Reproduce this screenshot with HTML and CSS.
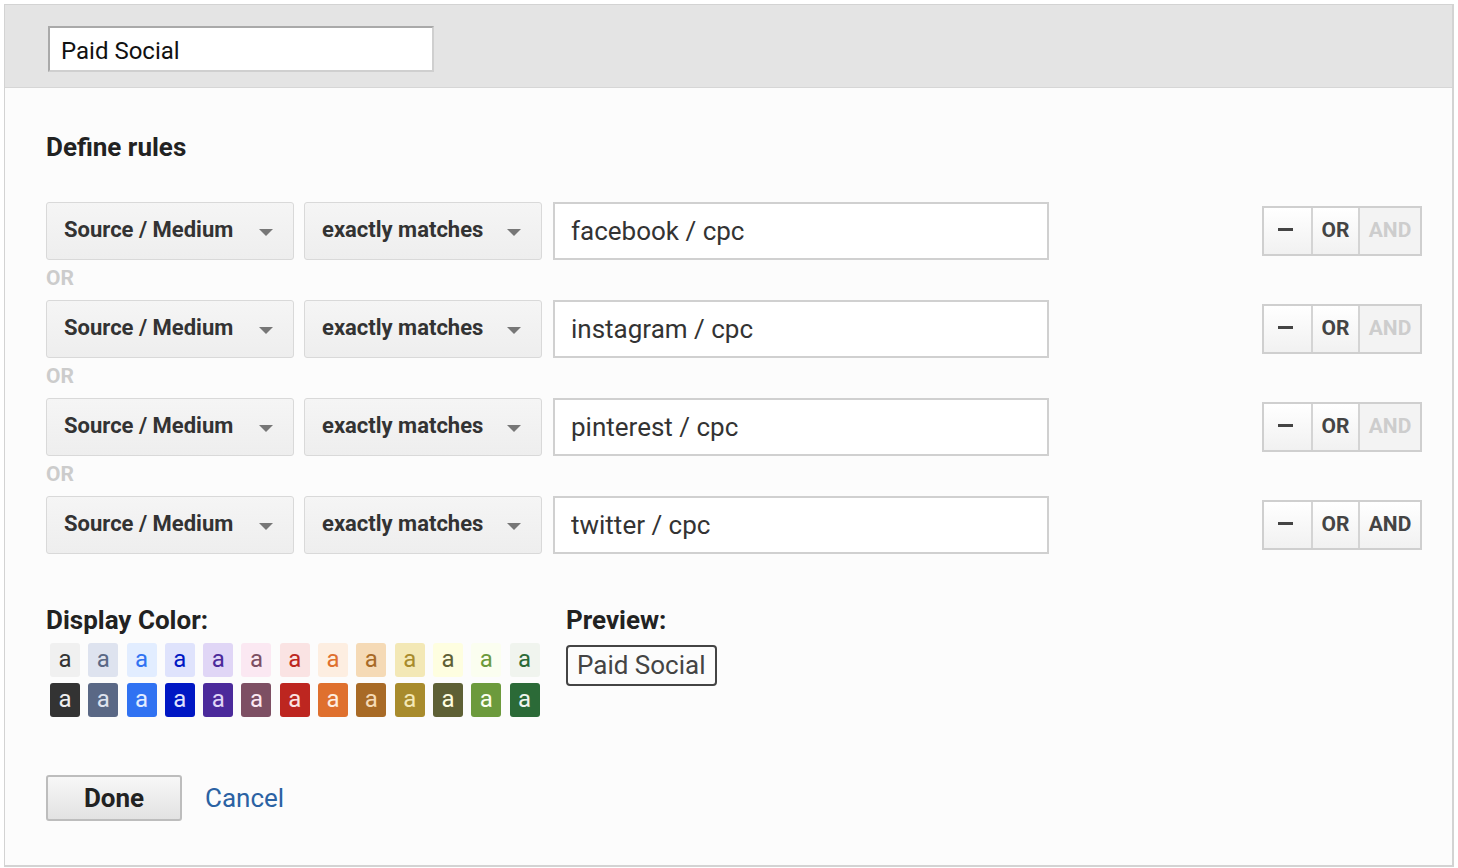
FILE: index.html
```html
<!DOCTYPE html>
<html lang="en">
<head>
  <meta charset="UTF-8" />
  <title>Channel definition</title>
  <link rel="stylesheet" href="styles.css">
</head>
<body>
  <div class="frame">
    <div class="header">
      <input class="name-input" type="text" value="Paid Social">
    </div>

    <div class="content">
      <h2 class="section-title">Define rules</h2>

      <div class="rules">
        <div class="rule">
          <div class="select wide">Source / Medium<span class="caret"></span></div>
          <div class="select">exactly matches<span class="caret"></span></div>
          <input class="rule-input" type="text" value="facebook / cpc">
          <div class="ops">
            <div class="op minus"><span class="bar"></span></div>
            <div class="op">OR</div>
            <div class="op and off">AND</div>
          </div>
        </div>
        <div class="or-label">OR</div>
        <div class="rule">
          <div class="select wide">Source / Medium<span class="caret"></span></div>
          <div class="select">exactly matches<span class="caret"></span></div>
          <input class="rule-input" type="text" value="instagram / cpc">
          <div class="ops">
            <div class="op minus"><span class="bar"></span></div>
            <div class="op">OR</div>
            <div class="op and off">AND</div>
          </div>
        </div>
        <div class="or-label">OR</div>
        <div class="rule">
          <div class="select wide">Source / Medium<span class="caret"></span></div>
          <div class="select">exactly matches<span class="caret"></span></div>
          <input class="rule-input" type="text" value="pinterest / cpc">
          <div class="ops">
            <div class="op minus"><span class="bar"></span></div>
            <div class="op">OR</div>
            <div class="op and off">AND</div>
          </div>
        </div>
        <div class="or-label">OR</div>
        <div class="rule">
          <div class="select wide">Source / Medium<span class="caret"></span></div>
          <div class="select">exactly matches<span class="caret"></span></div>
          <input class="rule-input" type="text" value="twitter / cpc">
          <div class="ops">
            <div class="op minus"><span class="bar"></span></div>
            <div class="op">OR</div>
            <div class="op and">AND</div>
          </div>
        </div>
      </div>

      <div class="display">
        <div class="colors">
          <h3 class="label">Display Color:</h3>
          <div class="swatches">
            <span class="sw c1">a</span>
            <span class="sw c2">a</span>
            <span class="sw c3">a</span>
            <span class="sw c4">a</span>
            <span class="sw c5">a</span>
            <span class="sw c6">a</span>
            <span class="sw c7">a</span>
            <span class="sw c8">a</span>
            <span class="sw c9">a</span>
            <span class="sw c10">a</span>
            <span class="sw c11">a</span>
            <span class="sw c12">a</span>
            <span class="sw c13">a</span>
          </div>
          <div class="swatches dark">
            <span class="sw c1">a</span>
            <span class="sw c2">a</span>
            <span class="sw c3">a</span>
            <span class="sw c4">a</span>
            <span class="sw c5">a</span>
            <span class="sw c6">a</span>
            <span class="sw c7">a</span>
            <span class="sw c8">a</span>
            <span class="sw c9">a</span>
            <span class="sw c10">a</span>
            <span class="sw c11">a</span>
            <span class="sw c12">a</span>
            <span class="sw c13">a</span>
          </div>
        </div>
        <div class="preview">
          <h3 class="label">Preview:</h3>
          <span class="chip">Paid Social</span>
        </div>
      </div>

      <div class="actions">
        <button class="done">Done</button>
        <a class="cancel" href="#">Cancel</a>
      </div>
    </div>
  </div>
</body>
</html>
```

FILE: styles.css
```css
body {
  margin: 0;
  padding: 4px;
  font-family: Roboto, 'Liberation Sans', sans-serif;
  background: #fff;
  color: #222;
}
.frame {
  border: 1px solid #d3d3d3;
  border-right-width: 2px;
  border-bottom-width: 2px;
  background: #fcfcfc;
}
.header {
  background: #e4e4e4;
  border-bottom: 1px solid #d6d6d6;
  padding: 21px 0 15px 43px;
}
.name-input {
  display: block;
  box-sizing: border-box;
  width: 386px;
  height: 46px;
  margin: 0;
  padding: 3px 0 0 11px;
  border: 2px solid #cfcfcf;
  border-top-color: #a9a9a9;
  border-left-color: #a9a9a9;
  background: #fff;
  font-family: Roboto, sans-serif;
  font-size: 24px;
  color: #111;
  outline: none;
}
.content {
  padding: 0 30px 44px 41px;
}
.section-title {
  margin: 44px 0 40px;
  font-size: 26px;
  line-height: 30px;
  font-weight: 700;
  color: #222;
}
.rule {
  display: flex;
  align-items: center;
  height: 58px;
}
.select {
  box-sizing: border-box;
  width: 238px;
  height: 58px;
  margin-right: 11px;
  padding: 0 0 3px 17px;
  display: flex;
  align-items: center;
  border: 1px solid #d9d9d9;
  border-radius: 3px;
  background: linear-gradient(#f5f5f5, #eeeeee);
  font-size: 22px;
  font-weight: 700;
  color: #333;
  position: relative;
}
.select.wide {
  width: 248px;
  margin-right: 10px;
}
.caret {
  position: absolute;
  right: 20px;
  top: 26px;
  border-left: 7px solid transparent;
  border-right: 7px solid transparent;
  border-top: 7px solid #777;
}
.rule-input {
  box-sizing: border-box;
  width: 496px;
  height: 58px;
  margin: 0;
  padding: 0 0 0 16px;
  border: 2px solid #d0d0d0;
  background: #fff;
  font-family: Roboto, sans-serif;
  font-size: 26px;
  color: #333;
  outline: none;
}
.ops {
  margin-left: auto;
  display: flex;
  height: 50px;
  border: 2px solid #cfcfcf;
  box-sizing: border-box;
}
.op {
  display: flex;
  align-items: center;
  justify-content: center;
  width: 45px;
  padding-bottom: 3px;
  border-left: 2px solid #d4d4d4;
  background: linear-gradient(#ffffff, #f1f1f1);
  font-size: 21px;
  font-weight: 700;
  color: #444;
}
.op.minus {
  width: 47px;
  padding-right: 4px;
  box-sizing: border-box;
  border-left: none;
}
.op.and {
  width: 60px;
}
.op.off {
  color: #cdcdcd;
  background: #f3f3f3;
}
.bar {
  width: 15px;
  height: 3px;
  background: #444;
}
.or-label {
  height: 40px;
  line-height: 37px;
  font-size: 21px;
  font-weight: 700;
  color: #cccccc;
}
.display {
  display: flex;
  margin-top: 51px;
}
.colors {
  width: 494px;
  margin-right: 26px;
}
.label {
  margin: 0 0 8px;
  font-size: 26px;
  line-height: 30px;
  font-weight: 700;
  color: #222;
}
.swatches {
  display: flex;
  gap: 8.3px;
  padding-left: 4px;
  margin-bottom: 6px;
}
.sw {
  width: 30px;
  height: 34px;
  border-radius: 3px;
  text-align: center;
  line-height: 32px;
  font-size: 24px;
}
.c1 { background: #f0f0f0; color: #333333; }
.c2 { background: #dee3ef; color: #5a6885; }
.c3 { background: #e2edff; color: #3072f2; }
.c4 { background: #dfe3fc; color: #0017c4; }
.c5 { background: #e0d6f6; color: #4b2a9b; }
.c6 { background: #fbe8f2; color: #7d4f63; }
.c7 { background: #fae3e3; color: #bd2620; }
.c8 { background: #fdeee1; color: #df702e; }
.c9 { background: #f5dab6; color: #a86a26; }
.c10 { background: #f3e8b6; color: #a88b2c; }
.c11 { background: #fefee0; color: #5e6035; }
.c12 { background: #fbfef0; color: #6c9a3c; }
.c13 { background: #f0f4ee; color: #2b6a37; }
.dark .c1 { background: #333333; color: #f0f0f0; }
.dark .c2 { background: #5a6885; color: #dee3ef; }
.dark .c3 { background: #3072f2; color: #e2edff; }
.dark .c4 { background: #0017c4; color: #dfe3fc; }
.dark .c5 { background: #4b2a9b; color: #e0d6f6; }
.dark .c6 { background: #7d4f63; color: #fbe8f2; }
.dark .c7 { background: #bd2620; color: #fae3e3; }
.dark .c8 { background: #df702e; color: #fdeee1; }
.dark .c9 { background: #a86a26; color: #f5dab6; }
.dark .c10 { background: #a88b2c; color: #f3e8b6; }
.dark .c11 { background: #5e6035; color: #fefee0; }
.dark .c12 { background: #6c9a3c; color: #fbfef0; }
.dark .c13 { background: #2b6a37; color: #f0f4ee; }
.preview .label {
  margin-bottom: 10px;
}
.chip {
  display: inline-block;
  height: 41px;
  box-sizing: border-box;
  padding: 0 9px;
  border: 2px solid #444;
  border-radius: 4px;
  line-height: 37px;
  font-size: 26px;
  color: #444;
}
.actions {
  display: flex;
  align-items: center;
  margin-top: 52px;
}
.done {
  width: 136px;
  height: 46px;
  margin: 0 23px 0 0;
  border: 2px solid #bdbdbd;
  border-radius: 3px;
  background: linear-gradient(#f7f7f7, #e2e2e2);
  font-family: Roboto, sans-serif;
  font-size: 26px;
  font-weight: 700;
  color: #222;
}
.cancel {
  font-size: 26px;
  color: #2b62a3;
  text-decoration: none;
}
```
